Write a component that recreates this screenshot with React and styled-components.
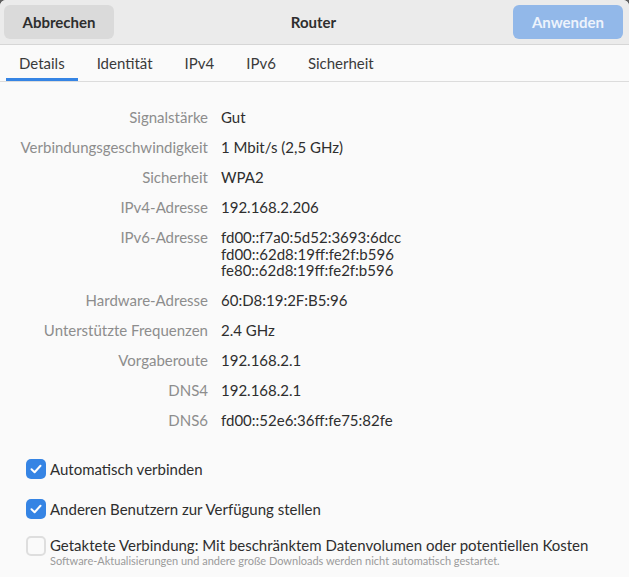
import React from 'react';
import styled, { createGlobalStyle } from 'styled-components';

const GlobalStyle = createGlobalStyle`
	html, body {
		margin: 0;
		padding: 0;
		background: #5e5e5e;
	}
	body {
		font-family: Lato, 'Noto Sans', sans-serif;
		-webkit-font-smoothing: antialiased;
	}
`;

const Window = styled.div`
	width: 629px;
	height: 577px;
	background: #fafafa;
	border-radius: 6px 6px 0 0;
	overflow: hidden;
	display: flex;
	flex-direction: column;
`;

const HeaderBar = styled.div`
	height: 45px;
	box-sizing: border-box;
	padding: 5px 6px 6px 4px;
	background: #ebebeb;
	border-bottom: 1px solid #d6d6d6;
	display: flex;
	align-items: center;
	justify-content: space-between;
`;

const HeaderButton = styled.button`
	height: 34px;
	width: 110px;
	border: none;
	border-radius: 6px;
	font-family: inherit;
	font-size: 15px;
	font-weight: 700;
	background: ${(props) => (props.type === 'suggested' ? '#92b8e9' : '#dadada')};
	color: ${(props) => (props.type === 'suggested' ? '#edf3fc' : '#2e2e2e')};
`;

const Title = styled.div`
	font-size: 15px;
	font-weight: 700;
	color: #2e2e2e;
`;

const Tabs = styled.div`
	height: 37px;
	box-sizing: border-box;
	padding-left: 6px;
	display: flex;
	border-bottom: 1px solid #dcdcdc;
`;

const Tab = styled.div`
	padding: 3px 13px 0;
	margin-right: 6px;
	display: flex;
	align-items: center;
	font-size: 15px;
	color: #3a3a3a;
	box-sizing: border-box;
	border-bottom: 3px solid ${(props) => (props.active ? '#3584e4' : 'transparent')};
`;

const Details = styled.div`
	padding: 27px 0 0 0;
	display: grid;
	grid-template-columns: 208px 1fr;
	column-gap: 13px;
	row-gap: 13px;
	font-size: 15px;
	line-height: 17px;
`;

const Label = styled.div`
	text-align: right;
	color: #8d8d8d;
`;

const Value = styled.div`
	color: #2e2e2e;
	line-height: ${(props) => (props.multi ? '16.5px' : '17px')};
`;

const Options = styled.div`
	padding: 30px 0 0 26px;
	display: flex;
	flex-direction: column;
`;

const CheckRow = styled.div`
	display: flex;
	align-items: flex-start;
	gap: 4px;
	margin-bottom: ${(props) => props.space || 0}px;
`;

const Box = styled.div`
	width: 20px;
	height: 20px;
	margin-top: ${(props) => (props.hint ? 1 : 0)}px;
	box-sizing: border-box;
	border-radius: 5px;
	flex-shrink: 0;
	display: flex;
	align-items: center;
	justify-content: center;
	background: ${(props) => (props.checked ? '#3584e4' : '#fafafa')};
	border: ${(props) => (props.checked ? 'none' : '2px solid #dedede')};
`;

const CheckText = styled.div`
	display: flex;
	flex-direction: column;
`;

const CheckLabel = styled.span`
	font-size: 15px;
	line-height: 20px;
	color: #2e2e2e;
`;

const CheckHint = styled.span`
	font-size: 11px;
	line-height: 11px;
	color: #9a9a9a;
`;

const Check = ({ checked, label, hint, space }) => (
	<CheckRow space={space}>
		<Box checked={checked} hint={hint}>
			{checked && (
				<svg width='14' height='14' viewBox='0 0 14 14'>
					<path d='M2.5 7.3 L5.6 10.2 L11.5 3.8' fill='none' stroke='#fff' strokeWidth='2' strokeLinecap='round' strokeLinejoin='round' />
				</svg>
			)}
		</Box>
		<CheckText>
			<CheckLabel>{label}</CheckLabel>
			{hint && <CheckHint>{hint}</CheckHint>}
		</CheckText>
	</CheckRow>
);

const rows = [
	['Signalstärke', ['Gut']],
	['Verbindungsgeschwindigkeit', ['1 Mbit/s (2,5 GHz)']],
	['Sicherheit', ['WPA2']],
	['IPv4-Adresse', ['192.168.2.206']],
	['IPv6-Adresse', ['fd00::f7a0:5d52:3693:6dcc', 'fd00::62d8:19ff:fe2f:b596', 'fe80::62d8:19ff:fe2f:b596']],
	['Hardware-Adresse', ['60:D8:19:2F:B5:96']],
	['Unterstützte Frequenzen', ['2.4 GHz']],
	['Vorgaberoute', ['192.168.2.1']],
	['DNS4', ['192.168.2.1']],
	['DNS6', ['fd00::52e6:36ff:fe75:82fe']],
];

const App = () => {
	return (
		<Window>
			<GlobalStyle />
			<HeaderBar>
				<HeaderButton>Abbrechen</HeaderButton>
				<Title>Router</Title>
				<HeaderButton type='suggested'>Anwenden</HeaderButton>
			</HeaderBar>
			<Tabs>
				<Tab active>Details</Tab>
				<Tab>Identität</Tab>
				<Tab>IPv4</Tab>
				<Tab>IPv6</Tab>
				<Tab>Sicherheit</Tab>
			</Tabs>
			<Details>
				{rows.map(([label, values]) => (
					<React.Fragment key={label}>
						<Label>{label}</Label>
						<Value multi={values.length > 1}>
							{values.map((v) => (
								<div key={v}>{v}</div>
							))}
						</Value>
					</React.Fragment>
				))}
			</Details>
			<Options>
				<Check checked space={20} label='Automatisch verbinden' />
				<Check checked space={16} label='Anderen Benutzern zur Verfügung stellen' />
				<Check
					label='Getaktete Verbindung: Mit beschränktem Datenvolumen oder potentiellen Kosten'
					hint='Software-Aktualisierungen und andere große Downloads werden nicht automatisch gestartet.'
				/>
			</Options>
		</Window>
	);
};

export default App;
